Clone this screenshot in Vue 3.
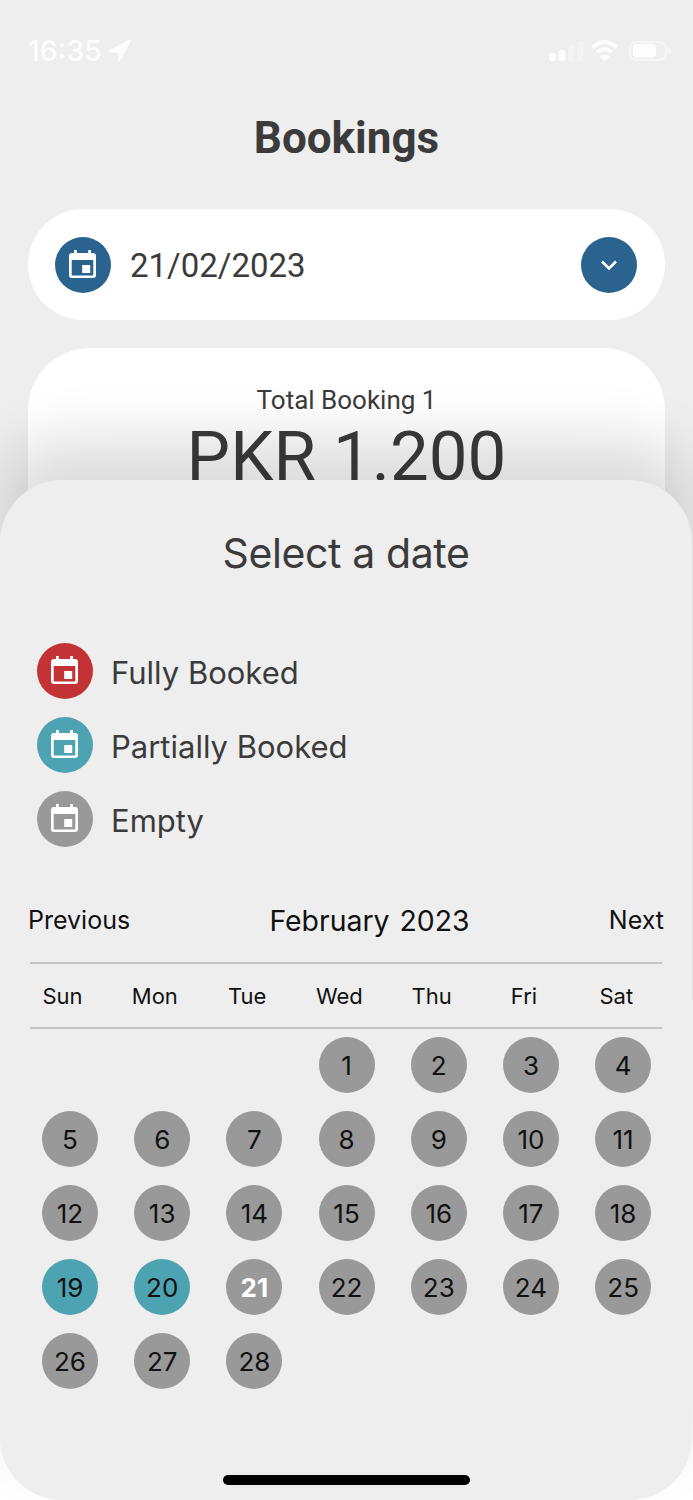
<script setup>
const eventPath = 'M5 0h2.800v3h11.400V0H22v3h2a3 3 0 0 1 3 3v19a3 3 0 0 1-3 3H3a3 3 0 0 1-3-3V6a3 3 0 0 1 3-3h2zM2.700 10v15a.6.6 0 0 0 .6.6h20.400a.6.6 0 0 0 .6-.6V10zM13.200 15h8v8h-8z'
const legend = [
  { label: 'Fully Booked', cls: 'red' },
  { label: 'Partially Booked', cls: 'teal' },
  { label: 'Empty', cls: 'grey' }
]
const weekdays = ['Sun', 'Mon', 'Tue', 'Wed', 'Thu', 'Fri', 'Sat']
const blanks = [1, 2, 3]
const days = Array.from({ length: 28 }, (_, i) => i + 1)
</script>

<template>
  <div class="screen">
    <div class="back">
      <div class="status">
        <div class="status-left">
          <span class="time">16:35</span>
          <svg class="arrow" width="24" height="24" viewBox="0 0 24 24"><path d="M22.300 1.800 2 12.600c-1 .6-.6 2 .5 2h8.300c.3 0 .5.2.5.5v7.300c0 1.200 1.500 1.400 1.900.3L23.800 3.400c.4-1-.6-2-1.500-1.600z" fill="#fff"/></svg>
        </div>
        <svg class="status-right" width="122" height="24" viewBox="0 0 122 24">
          <rect x="0" y="15" width="7" height="8" rx="2.500" fill="#fff"/>
          <rect x="9.500" y="12" width="7" height="11" rx="2.500" fill="#fff"/>
          <rect x="19" y="7" width="7" height="16" rx="2.500" fill="#fff" opacity=".35"/>
          <rect x="28" y="3" width="6.500" height="20" rx="2.500" fill="#fff" opacity=".35"/>
          <path d="M43.500 9.500c7-7 17-7 24 0" fill="none" stroke="#fff" stroke-width="4.200"/>
          <path d="M48.300 14.500c4.500-4.200 10-4.200 14.500 0" fill="none" stroke="#fff" stroke-width="4.200"/>
          <path d="M55.500 23.500l-5-5c3-2.600 7-2.600 10 0z" fill="#fff"/>
          <rect x="81" y="4" width="36" height="18" rx="6" fill="none" stroke="#fff" stroke-opacity=".5" stroke-width="2"/>
          <rect x="84" y="6" width="23" height="13.500" rx="3" fill="#fff"/>
          <rect x="119" y="10" width="3" height="6" rx="1.200" fill="#fff" opacity=".5"/>
        </svg>
      </div>
      <h1 class="title">Bookings</h1>
      <div class="date-pill">
        <span class="icon-circle blue">
          <svg class="cal" width="27" height="28" viewBox="0 0 27 28"><path :d="eventPath" fill="#fff" fill-rule="evenodd"/></svg>
        </span>
        <span class="date-text">21/02/2023</span>
        <span class="icon-circle blue chevron">
          <svg width="18" height="12" viewBox="0 0 18 12"><path d="M2 2.500 9 9.500l7-7" fill="none" stroke="#fff" stroke-width="2.500"/></svg>
        </span>
      </div>
      <div class="card">
        <div class="card-label">Total Booking 1</div>
        <div class="card-amount">PKR 1.200</div>
      </div>
    </div>

    <div class="sheet">
      <h2 class="sheet-title">Select a date</h2>
      <ul class="legend">
        <li v-for="item in legend" :key="item.label" class="legend-row">
          <span class="icon-circle" :class="item.cls">
            <svg class="cal" width="27" height="28" viewBox="0 0 27 28"><path :d="eventPath" fill="#fff" fill-rule="evenodd"/></svg>
          </span>
          <span class="legend-label">{{ item.label }}</span>
        </li>
      </ul>
      <div class="month-row">
        <span>Previous</span>
        <span class="month"><span>February</span><span>2023</span></span>
        <span>Next</span>
      </div>
      <div class="weekdays">
        <span v-for="d in weekdays" :key="d">{{ d }}</span>
      </div>
      <div class="days">
        <span v-for="b in blanks" :key="'b' + b"></span>
        <span
          v-for="d in days"
          :key="d"
          class="day"
          :class="{ partial: d === 19 || d === 20, today: d === 21 }"
        >{{ d }}</span>
      </div>
      <div class="home-bar"></div>
    </div>
  </div>
</template>

<style scoped>
.screen {
  position: relative;
  width: 693px;
  height: 1500px;
  overflow: hidden;
  background: #fff;
  font-family: Inter, "Liberation Sans", sans-serif;
  color: #3b3b3b;
}
.back {
  height: 1000px;
  background: #eee;
  padding: 0 28px;
  box-sizing: border-box;
  font-family: Roboto, "Liberation Sans", sans-serif;
}
.status {
  height: 100px;
  display: flex;
  justify-content: space-between;
  align-items: center;
  filter: blur(.6px);
  opacity: .9;
}
.status-left {
  display: flex;
  align-items: center;
  gap: 5px;
}
.time {
  font-family: Inter, sans-serif;
  font-size: 28.500px;
  font-weight: 500;
  color: #fff;
}
.status-right {
  margin-right: -6px;
}
.title {
  margin: 10px 0 0;
  text-align: center;
  font-size: 44px;
  line-height: 56px;
  font-weight: 700;
}
.date-pill {
  margin-top: 43px;
  height: 111px;
  border-radius: 56px;
  background: #fff;
  display: flex;
  align-items: center;
  padding: 0 28px 0 27px;
}
.icon-circle {
  width: 56px;
  height: 56px;
  border-radius: 50%;
  display: flex;
  align-items: center;
  justify-content: center;
  flex: none;
}
.cal {
  margin: 0 1px 2px 0;
}
.blue { background: #2b638f; }
.red { background: #c33235; }
.teal { background: #4ea3b2; }
.grey { background: #999; }
.date-text {
  margin-left: 19px;
  padding-top: 2px;
  font-size: 33px;
  flex: 1;
}
.card {
  margin-top: 28px;
  height: 400px;
  border-radius: 62px;
  background: #fff;
  text-align: center;
  padding-top: 36px;
  box-sizing: border-box;
}
.card-label {
  font-size: 26px;
  line-height: 32px;
}
.card-amount {
  font-size: 69px;
  line-height: 80px;
  margin-top: 1px;
}
.sheet {
  position: absolute;
  left: 0;
  right: 1px;
  top: 480px;
  bottom: 0;
  background: #eee;
  border-radius: 62px;
  box-shadow: 0 -40px 60px rgba(0, 0, 0, .14);
}
.sheet-title {
  margin: 0;
  padding-top: 46px;
  text-align: center;
  font-size: 41px;
  line-height: 54px;
  font-weight: 400;
  letter-spacing: -.4px;
}
.legend {
  list-style: none;
  margin: 0;
  padding: 63px 0 0 37px;
  display: flex;
  flex-direction: column;
  gap: 18px;
}
.legend-row {
  display: flex;
  align-items: center;
  gap: 18px;
  font-size: 31px;
  height: 56px;
}
.legend-label {
  padding-top: 2px;
}
.month-row {
  display: flex;
  justify-content: space-between;
  align-items: center;
  margin: 54px 28px 0;
  height: 38px;
  font-size: 25px;
  color: #111;
}
.month {
  display: flex;
  gap: 10px;
  font-size: 28.400px;
}
.weekdays {
  margin: 23px 30px 0;
  border-top: 2px solid #c4c4c4;
  border-bottom: 2px solid #c4c4c4;
  height: 63px;
  display: grid;
  grid-template-columns: repeat(7, 65px);
  column-gap: 27.300px;
  align-items: center;
  justify-items: center;
  font-size: 22px;
  color: #111;
}
.days {
  margin: 8px 0 0;
  padding-left: 42px;
  display: grid;
  grid-template-columns: repeat(7, 56px);
  column-gap: 36.200px;
  row-gap: 18px;
  grid-auto-rows: 56px;
}
.day {
  border-radius: 50%;
  background: #999;
  display: flex;
  align-items: center;
  justify-content: center;
  font-size: 26px;
  color: #111;
}
.day.partial { background: #4ea3b2; }
.day.today { color: #fff; font-weight: 700; }
.home-bar {
  position: absolute;
  left: 223px;
  bottom: 15px;
  width: 247px;
  height: 10px;
  border-radius: 5px;
  background: #000;
}
</style>
